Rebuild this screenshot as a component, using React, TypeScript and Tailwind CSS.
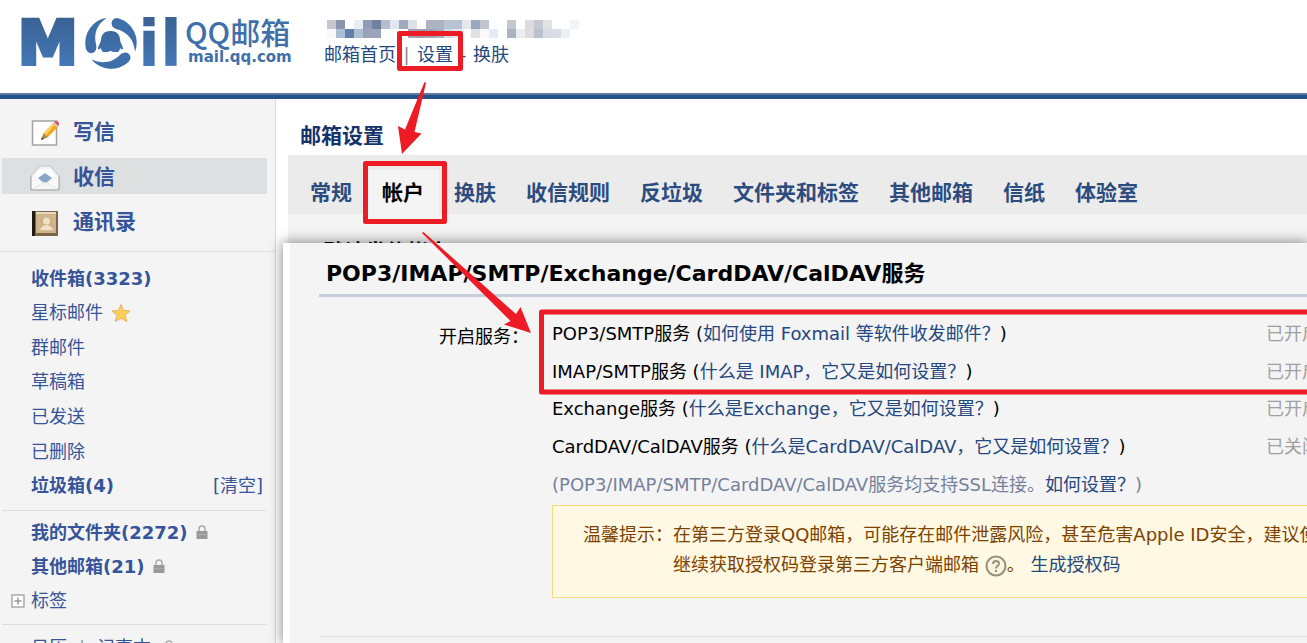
import type { ReactNode } from "react";

const mosaicRows = [
  [
    "#c5c7ce", "#8c95a9", "#ffffff", "#e9ecf0", "#8f9db9", "#70819f", "#b6bccb", "#e2e6f1", "#a1aabd", "#dde0e5",
    "#ffffff", "#adb3c2", "#adb3c3", "#b7c4d6", "#b9c2d4", "#e6e8ec", "#9ca8c1", "#c0c4cd", "#ffffff", "#ffffff",
    "#c2c7d1", "#ffffff", "#dcdada", "#c4c8d1", "#dfe3e8", "#ffffff", "#ffffff", "#eff4f9",
  ],
  [
    "#fbf8fa", "#abbed6", "#5f80a7", "#abbfd6", "#9aa3b4", "#9aa5bc", "#ffffff", "#ffffff", "#ffffff", "#a79fb5",
    "#9a9db0", "#9ea5b9", "#a4afc2", "#cfdbe8", "#e0e5ee", "#ffffff", "#e0e1e4", "#fbf9fb", "#e7ebf4", "#ffffff",
    "#abb2c4", "#e9eef1", "#e1dbdb", "#bac0cd", "#d7dbe4", "#dadde3", "#eaf0f4", "#ffffff",
  ],
];

const tabs = ["常规", "帐户", "换肤", "收信规则", "反垃圾", "文件夹和标签", "其他邮箱", "信纸", "体验室"];

const services = [
  { name: "POP3/SMTP服务", help: "如何使用 Foxmail 等软件收发邮件？", status: "已开启" },
  { name: "IMAP/SMTP服务", help: "什么是 IMAP，它又是如何设置？", status: "已开启" },
  { name: "Exchange服务", help: "什么是Exchange，它又是如何设置？", status: "已开启" },
  { name: "CardDAV/CalDAV服务", help: "什么是CardDAV/CalDAV，它又是如何设置？", status: "已关闭" },
];

const logoBlade = "M1 -22Q3 -26 8 -24.500A25.500 25.500 0 0 1 24 9C23 -3 17 -11 5 -14Q-1 -17 1 -22Z";

function Logo() {
  return (
    <svg className="shrink-0" width="170" height="88" viewBox="0 0 170 88" role="img" aria-label="Mail">
      <defs>
        <linearGradient id="logoBlue" gradientUnits="userSpaceOnUse" x1="0" y1="18" x2="0" y2="70">
          <stop offset="0" stopColor="#3a6294" />
          <stop offset="1" stopColor="#4479b9" />
        </linearGradient>
      </defs>
      <g fill="url(#logoBlue)" fontFamily="DejaVu Sans" fontWeight="700">
        <text x="6" y="64" fontSize="60" stroke="url(#logoBlue)" strokeWidth="4">
          M
        </text>
        <text x="126" y="66" fontSize="64">
          il
        </text>
      </g>
      <circle cx="99" cy="43" r="29" fill="#fff" />
      <g fill="#3f6fa9" transform="translate(99 43)">
        <path d={logoBlade} />
        <path d={logoBlade} transform="rotate(120)" />
        <path d={logoBlade} transform="rotate(240)" />
      </g>
      <path
        d="M98 31c-6 0-9 4-9 9c0 2-3 6-3 9c1 1 2 0 3-1c0 2 1 3 2 4h5l2-1h1l2 1h5c1-1 2-2 2-4c1 1 2 2 3 1c0-3-3-7-3-9c0-5-3-9-9-9Z"
        fill="url(#logoBlue)"
      />
    </svg>
  );
}

function AccountMosaic() {
  return (
    <svg width="252" height="18" shapeRendering="crispEdges" aria-hidden="true">
      {mosaicRows.map((row, y) =>
        row.map((fill, x) => <rect key={`${x}-${y}`} x={x * 9} y={y * 9} width="9" height="9" fill={fill} />)
      )}
    </svg>
  );
}

function ComposeIcon() {
  return (
    <svg width="30" height="28" viewBox="0 0 30 28" aria-hidden="true">
      <rect x="2.500" y="2" width="24" height="24" fill="#fff" stroke="#a3a3a3" strokeWidth="1.500" />
      <path d="M11 21L13.500 14.500L23 4L28 8L18 18Z" fill="#f0ac20" />
      <path d="M13.500 14.500L23 4L25 5.500L15.500 16.500Z" fill="#fbd060" />
      <path d="M11 21L13.500 14.500L18 18Z" fill="#a58a5c" />
      <path d="M11 21L12 18.500L13.800 19.800Z" fill="#333" />
      <path d="M22.500 4.500L24 3L28.500 7L27.500 8.500Z" fill="#c9ccd0" />
      <path d="M24 3L25.500 2C27.500 1.500 29.500 3.500 29 5.500L28.500 7Z" fill="#e0505c" />
    </svg>
  );
}

function InboxIcon() {
  return (
    <svg width="30" height="28" viewBox="0 0 30 28" aria-hidden="true">
      <path d="M1 12L9 3Q10 2 12 2H18Q20 2 21 3L29 12V26H1Z" fill="#f1f1f1" stroke="#c3c6c7" />
      <path d="M4 12L10 5H20L26 12L15 20Z" fill="#fff" />
      <path d="M8 14L15 9L22 14L15 20Z" fill="#8aa6cb" />
      <path d="M1 12L12 19L1 26Z" fill="#fafafa" />
      <path d="M29 12L18 19L29 26Z" fill="#fafafa" />
      <path d="M1 26L13 19Q15 18 17 19L29 26Z" fill="#f6f6f6" stroke="#e3e6e7" />
      <path d="M1 12V26H29V12" fill="none" stroke="#9da1a3" />
    </svg>
  );
}

function ContactsIcon() {
  return (
    <svg width="30" height="28" viewBox="0 0 30 28" aria-hidden="true">
      <rect x="2" y="2" width="26" height="25" fill="#7d6647" />
      <rect x="6" y="3" width="20" height="21" fill="#cdb389" />
      <rect x="6" y="3" width="20" height="2" fill="#e9dac0" />
      <rect x="2" y="2" width="3" height="25" fill="#1f1a14" />
      <rect x="9" y="7" width="15" height="14" fill="#ceb088" stroke="#d9bd95" />
      <circle cx="16.500" cy="12" r="3.500" fill="#eee0c6" />
      <path d="M10 21Q11 17 15 16H18Q22 17 23 21Z" fill="#eee0c6" />
    </svg>
  );
}

function StarIcon() {
  return (
    <svg width="20" height="20" viewBox="0 0 20 20" aria-hidden="true">
      <path
        d="M10 1.500L12.500 7.500L19 8L14 12.200L15.800 18.500L10 15.200L4.200 18.500L6 12.200L1 8L7.500 7.500Z"
        fill="#fdcf57"
        stroke="#eab268"
      />
    </svg>
  );
}

function LockIcon() {
  return (
    <svg width="12" height="14" viewBox="0 0 12 14" aria-hidden="true">
      <path d="M3 7V4Q3 1 6 1Q9 1 9 4V7" fill="none" stroke="#aaa" strokeWidth="1.500" />
      <rect x="0.500" y="6" width="11" height="8" fill="#999" />
      <path d="M0.500 9.500H11.500" stroke="#aaa" />
    </svg>
  );
}

function ExpandIcon() {
  return (
    <svg width="14" height="14" viewBox="0 0 14 14" aria-hidden="true">
      <rect x="1" y="1" width="12" height="12" fill="#fff" stroke="#aaa" strokeWidth="1.500" />
      <path d="M3.500 7H10.500M7 3.500V10.500" stroke="#999" strokeWidth="1.500" />
    </svg>
  );
}

function HelpIcon() {
  return (
    <svg className="inline-block align-middle" width="22" height="22" viewBox="0 0 22 22" role="img" aria-label="帮助">
      <circle cx="11" cy="11" r="9.500" fill="#faf3df" stroke="#989178" strokeWidth="2" />
      <path d="M8 9Q8 6 11 6Q14 6 14 8.500Q14 10 12.500 11Q11 12 11 13.500" fill="none" stroke="#989178" strokeWidth="2" />
      <rect x="10" y="15" width="2" height="2" fill="#989178" />
    </svg>
  );
}

function FolderRow({ label, bold, children }: { label: string; bold?: boolean; children?: ReactNode }) {
  return (
    <li className="flex items-center gap-2">
      <a href="#" className={bold ? "font-bold" : ""}>
        {label}
      </a>
      {children}
    </li>
  );
}

function Sidebar() {
  return (
    <aside className="w-[276px] shrink-0 border-r border-[#dadada] bg-[#f4f4f4] text-[#36549a]">
      <nav className="flex flex-col gap-[9px] border-b border-[#dedede] pt-[14px] pr-2 pb-3 pl-[2px] text-[21px] font-bold">
        <a href="#" className="flex h-9 items-center gap-[13px] pt-[3px] pl-7">
          <ComposeIcon />
          写信
        </a>
        <a href="#" className="flex h-9 items-center gap-[13px] bg-[#dce0e1] pt-[3px] pl-7">
          <InboxIcon />
          收信
        </a>
        <a href="#" className="flex h-9 items-center gap-[13px] pt-[3px] pl-7">
          <ContactsIcon />
          通讯录
        </a>
      </nav>
      <div className="pt-[9px] pr-2 pl-[2px] text-[18px]">
        <ul className="grid h-[242px] grid-rows-7 pl-[29px]">
          <FolderRow label="收件箱(3323)" bold />
          <FolderRow label="星标邮件">
            <StarIcon />
          </FolderRow>
          <FolderRow label="群邮件" />
          <FolderRow label="草稿箱" />
          <FolderRow label="已发送" />
          <FolderRow label="已删除" />
          <FolderRow label="垃圾箱(4)" bold>
            <a href="#" className="ml-auto pr-1">
              [清空]
            </a>
          </FolderRow>
        </ul>
        <ul className="mt-[7px] grid h-[115px] grid-rows-3 border-y border-[#dedede] pt-1 pb-1.5 pl-[29px]">
          <FolderRow label="我的文件夹(2272)" bold>
            <LockIcon />
          </FolderRow>
          <FolderRow label="其他邮箱(21)" bold>
            <LockIcon />
          </FolderRow>
          <li className="-ml-5 flex items-center gap-1.5">
            <ExpandIcon />
            <a href="#">标签</a>
          </li>
        </ul>
        <div className="flex h-11 items-center gap-3 pl-[29px]">
          <a href="#">日历</a>
          <span className="text-[#999]">|</span>
          <a href="#">记事本</a>
          <LockIcon />
        </div>
      </div>
    </aside>
  );
}

function ServicePanel() {
  return (
    <section className="absolute top-[144px] right-0 -bottom-4 left-[7px] overflow-hidden border-l-[7px] border-white bg-[#f4f4f4] pl-[29px] text-[18px] text-black">
      <h2 className="border-b-[3px] border-[#c8cddc] pt-[15px] pb-1 pl-[7px] text-[22px] leading-8 font-bold whitespace-nowrap">
        POP3/IMAP/SMTP/Exchange/CardDAV/CalDAV服务
      </h2>
      <div className="flex pt-[18px]">
        <div className="w-[233px] shrink-0 pl-[120px] leading-[44px] whitespace-nowrap">开启服务：</div>
        <div className="min-w-0 flex-1 whitespace-nowrap">
          <ul className="grid h-[188px] grid-rows-5">
            {services.map((service) => (
              <li key={service.name} className="flex items-center">
                <span className="w-[714px] shrink-0">
                  {service.name} (
                  <a href="#" className="text-[#24487f]">
                    {service.help}
                  </a>
                  )
                </span>
                <span className="text-[#a0a0a0]">{service.status}</span>
              </li>
            ))}
            <li className="flex items-center text-[#76819c]">
              (POP3/IMAP/SMTP/CardDAV/CalDAV服务均支持SSL连接。
              <a href="#" className="text-[#24487f]">
                如何设置？
              </a>
              )
            </li>
          </ul>
          <div className="mt-[2px] flex overflow-hidden border border-r-0 border-[#f5dc80] bg-[#fff8e2] pt-[14px] pb-[17px] pl-[30px] leading-[30px] text-[#7c4200]">
            <span>温馨提示：</span>
            <div>
              <p>在第三方登录QQ邮箱，可能存在邮件泄露风险，甚至危害Apple ID安全，建议使</p>
              <p className="h-[30px]">
                继续获取授权码登录第三方客户端邮箱 <HelpIcon />。{" "}
                <a href="#" className="text-[#24487f]">
                  生成授权码
                </a>
              </p>
            </div>
          </div>
        </div>
      </div>
      <hr className="mt-[38px] border-[#dedede]" />
    </section>
  );
}

// Red boxes and arrows that lead from 设置 to the mail services
function Annotations() {
  return (
    <svg className="pointer-events-none absolute inset-0 h-full w-full" aria-hidden="true">
      <g fill="none" stroke="#ed1c24" strokeWidth="5" strokeLinejoin="round">
        <rect x="399.500" y="33.500" width="61" height="35" />
        <rect x="365.500" y="163.500" width="79" height="58" />
        <rect x="541.500" y="312" width="900" height="80" />
      </g>
      <g fill="#ed1c24">
        <path d="M424.500 82L426 83L414.500 132L421.500 133.500L402 154L398 126L405 129.500Z" />
        <path d="M422 233L423.500 232L516 314L520.500 307L531 333L504 324.500L510.500 321Z" />
      </g>
    </svg>
  );
}

export default function App() {
  return (
    <div
      lang="zh-CN"
      className="relative flex h-screen flex-col overflow-hidden bg-white font-['DejaVu_Sans','Noto_Sans_CJK_SC',sans-serif]"
    >
      <header className="flex h-[93px] shrink-0 pl-3">
        <Logo />
        <div className="flex w-[142px] flex-col gap-[2px] pt-[15px] pl-[3px] text-[#4070aa]">
          <span className="font-['Noto_Sans_CJK_SC',sans-serif] text-[30px] leading-8 font-medium">QQ邮箱</span>
          <span className="pl-[3px] text-[15px] leading-4 font-bold">mail.qq.com</span>
        </div>
        <div className="pt-5 pl-[3px]">
          <AccountMosaic />
          <nav className="-ml-[3px] flex items-center pt-[3px] text-[18px] leading-7 text-[#24487f]">
            <a href="#">邮箱首页</a>
            <span className="w-[21px] text-center text-[#888]">|</span>
            <a href="#">设置</a>
            <span className="w-5 text-center">-</span>
            <a href="#">换肤</a>
          </nav>
        </div>
      </header>
      <div className="h-[6px] shrink-0 border-t-2 border-[#607a9d] bg-[#24538a]" />
      <div className="flex min-h-0 flex-1">
        <Sidebar />
        <main className="relative min-w-0 flex-1 pl-3">
          <h1 className="h-14 pt-[21px] pl-3 text-[21px] leading-8 font-bold text-[#14336b]">邮箱设置</h1>
          <nav className="flex bg-[#ebebeb] pt-[15px] pl-[7px] text-[21px] font-bold whitespace-nowrap text-[#2c4c80]">
            {tabs.map((tab) => (
              <a
                key={tab}
                href="#"
                className={
                  tab === "帐户" ? "h-11 bg-[#f4f4f4] px-[15px] leading-[46px] text-black" : "h-11 px-[15px] leading-[46px]"
                }
              >
                {tab}
              </a>
            ))}
          </nav>
          <div className="h-full bg-[#f4f4f4] pt-[22px] pl-[35px] text-[21px] leading-8 font-bold text-black">
            默认发信帐户
          </div>
          <div className="absolute top-[144px] right-0 bottom-0 left-[7px] shadow-[0_0_12px_1px_rgba(0,0,0,0.45)]" />
          <ServicePanel />
        </main>
      </div>
      <Annotations />
    </div>
  );
}
